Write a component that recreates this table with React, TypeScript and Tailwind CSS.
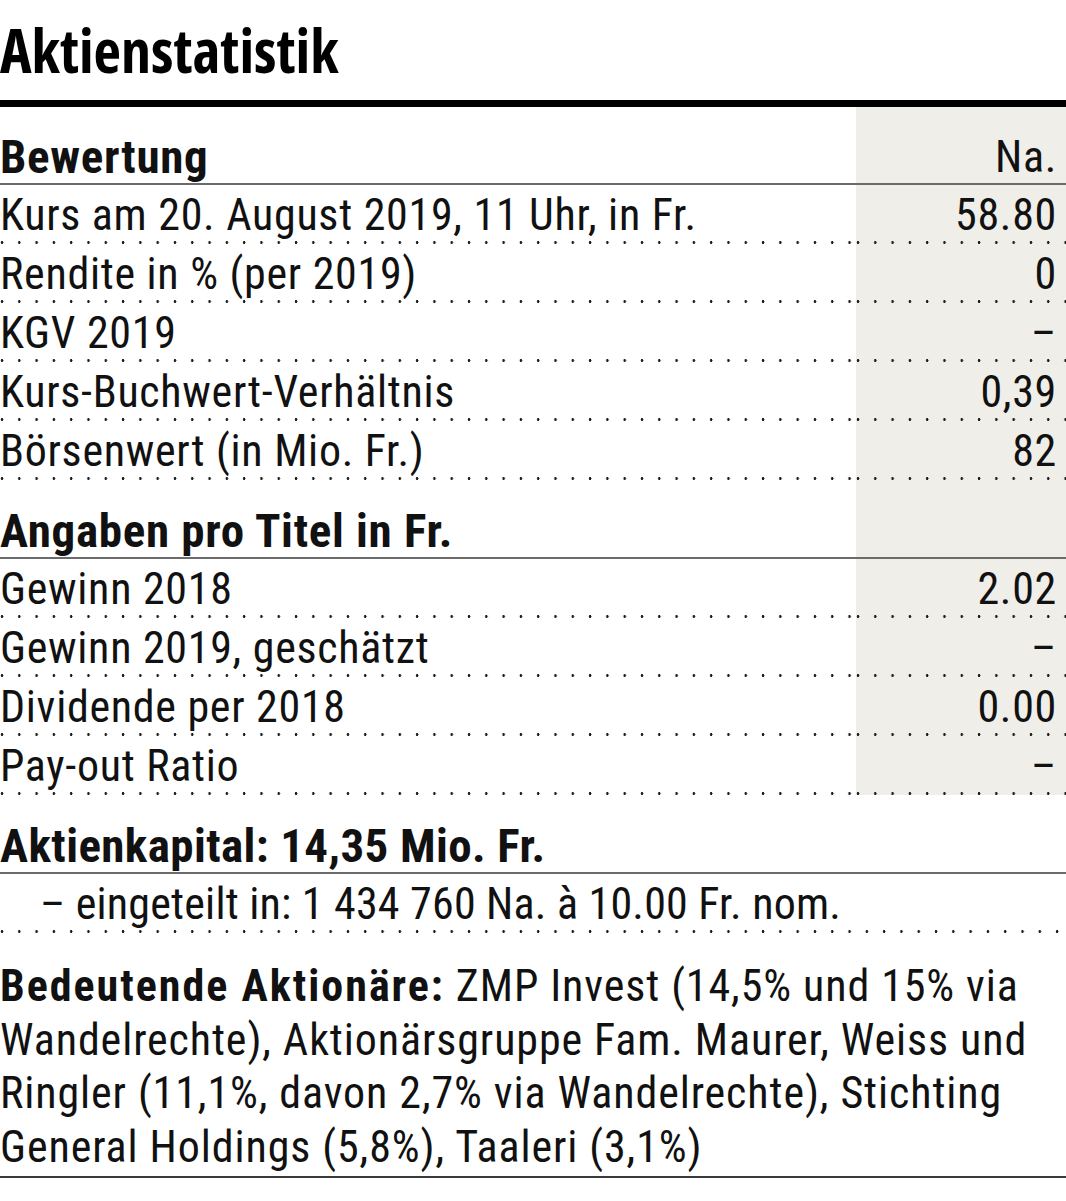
type Row = { label: string; value: string }

const bewertung: Row[] = [
  { label: 'Kurs am 20. August 2019, 11 Uhr, in Fr.', value: '58.80' },
  { label: 'Rendite in % (per 2019)', value: '0' },
  { label: 'KGV 2019', value: '–' },
  { label: 'Kurs-Buchwert-Verhältnis', value: '0,39' },
  { label: 'Börsenwert (in Mio. Fr.)', value: '82' },
]

const proTitel: Row[] = [
  { label: 'Gewinn 2018', value: '2.02' },
  { label: 'Gewinn 2019, geschätzt', value: '–' },
  { label: 'Dividende per 2018', value: '0.00' },
  { label: 'Pay-out Ratio', value: '–' },
]

// dot pattern used for the row separators
const dots =
  'h-[3px] bg-[radial-gradient(circle_at_2px_1.5px,#1a1a1a_1.1px,transparent_1.6px)] bg-[length:17.3px_3px] bg-repeat-x'

function Dotted() {
  return (
    <div className="flex">
      <div className={`flex-1 ${dots}`} />
      <div className="w-[210px] bg-[#efeee9]">
        <div className={dots} />
      </div>
    </div>
  )
}

function DataRow({ row }: { row: Row }) {
  return (
    <>
      <div className="flex h-[56px] pt-[5px] leading-[51px]">
        <div className="flex-1 whitespace-nowrap">{row.label}</div>
        <div className="-mt-[5px] w-[210px] bg-[#efeee9] pt-[5px] pr-[9px] text-right">{row.value}</div>
      </div>
      <Dotted />
    </>
  )
}

function HeadRow({ title, right, pad }: { title: string; right?: string; pad: string }) {
  return (
    <>
      <div className="flex">
        <div className={`flex-1 ${pad}`}>
          <div className="h-[56px] whitespace-nowrap text-[47px] font-bold leading-[60px] tracking-[0.7px]">{title}</div>
        </div>
        <div className={`w-[210px] bg-[#efeee9] pr-[9px] text-right ${pad}`}>
          <div className="h-[56px] leading-[60px]">{right}</div>
        </div>
      </div>
      <div className="h-[2px] bg-[#6b6b6b]" />
    </>
  )
}

export default function App() {
  return (
    <div className='w-[1066px] bg-white text-[44px] tracking-[0.7px] text-[#111] font-["Roboto"] [font-stretch:condensed]'>
      <div className="pt-[15px] pb-[15px]">
        <h1 className='h-[70px] text-[60px] font-bold leading-[70px] tracking-normal text-black font-["Open_Sans"] [font-stretch:75%]'>
          Aktienstatistik
        </h1>
      </div>
      <div className="h-[7px] bg-black" />

      <HeadRow title="Bewertung" right="Na." pad="pt-[20px]" />
      {bewertung.map(r => (
        <DataRow key={r.label} row={r} />
      ))}

      <HeadRow title="Angaben pro Titel in Fr." pad="pt-[21px]" />
      {proTitel.map(r => (
        <DataRow key={r.label} row={r} />
      ))}

      <div className="pt-[21px]">
        <div className="h-[56px] whitespace-nowrap text-[47px] font-bold leading-[60px] tracking-[0.4px]">
          Aktienkapital: 14,35 Mio. Fr.
        </div>
      </div>
      <div className="h-[2px] bg-[#6b6b6b]" />
      <div className="h-[56px] whitespace-nowrap pt-[5px] pl-[40px] leading-[51px] tracking-[0.2px]">
        – eingeteilt in: 1 434 760 Na. à 10.00 Fr. nom.
      </div>
      <div className={dots} />

      <p className="pt-[27px] pb-[2px] leading-[53.5px] whitespace-nowrap tracking-[0.9px]">
        <span className="font-bold tracking-[2px]">Bedeutende Aktionäre:</span> ZMP Invest (14,5% und 15% via
        <br />
        Wandelrechte), Aktionärsgruppe Fam. Maurer, Weiss und
        <br />
        Ringler (11,1%, davon 2,7% via Wandelrechte), Stichting
        <br />
        General Holdings (5,8%), Taaleri (3,1%)
      </p>
      <div className="h-[2px] bg-[#3a3a3a]" />
    </div>
  )
}
